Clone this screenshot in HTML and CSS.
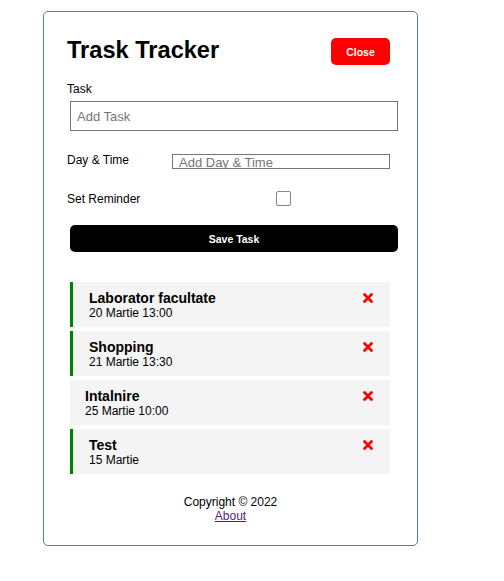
FILE: index.html
```html
<!DOCTYPE html>
<html lang="ro">
<head>
<meta charset="utf-8">
<title>Trask Tracker</title>
<link rel="stylesheet" href="styles.css">
</head>
<body>
<div class="container">
  <header class="header">
    <h1 class="title">Trask Tracker</h1>
    <button class="btn btn-close" type="button">Close</button>
  </header>

  <form class="add-form">
    <div class="field-task">
      <label class="label">Task</label>
      <input class="input-task" type="text" placeholder="Add Task">
    </div>
    <div class="field-row field-day">
      <label class="label">Day &amp; Time</label>
      <input class="input-day" type="text" placeholder="Add Day &amp; Time">
    </div>
    <div class="field-row field-reminder">
      <label class="label label-reminder">Set Reminder</label>
      <input class="checkbox" type="checkbox">
    </div>
    <button class="btn btn-save" type="button">Save Task</button>
  </form>

  <div class="tasks">
    <div class="task reminder">
      <div class="task-text">
        <h3 class="task-title">Laborator facultate</h3>
        <p class="task-day">20 Martie 13:00</p>
      </div>
      <svg class="task-del" viewBox="0 80 352 352" width="10" height="10"><path fill="#ff0000" d="M242.72 256l100.07-100.07c12.28-12.28 12.28-32.19 0-44.48l-22.24-22.24c-12.28-12.28-32.19-12.28-44.48 0L176 189.28 75.93 89.21c-12.28-12.28-32.19-12.28-44.48 0L9.21 111.45c-12.28 12.28-12.28 32.19 0 44.48L109.28 256 9.21 356.07c-12.28 12.28-12.28 32.19 0 44.48l22.24 22.24c12.28 12.28 32.2 12.28 44.48 0L176 322.72l100.07 100.07c12.28 12.28 32.2 12.28 44.48 0l22.24-22.24c12.28-12.28 12.28-32.19 0-44.48L242.72 256z"/></svg>
    </div>
    <div class="task reminder">
      <div class="task-text">
        <h3 class="task-title">Shopping</h3>
        <p class="task-day">21 Martie 13:30</p>
      </div>
      <svg class="task-del" viewBox="0 80 352 352" width="10" height="10"><path fill="#ff0000" d="M242.72 256l100.07-100.07c12.28-12.28 12.28-32.19 0-44.48l-22.24-22.24c-12.28-12.28-32.19-12.28-44.48 0L176 189.28 75.93 89.21c-12.28-12.28-32.19-12.28-44.48 0L9.21 111.45c-12.28 12.28-12.28 32.19 0 44.48L109.28 256 9.21 356.07c-12.28 12.28-12.28 32.19 0 44.48l22.24 22.24c12.28 12.28 32.2 12.28 44.48 0L176 322.72l100.07 100.07c12.28 12.28 32.2 12.28 44.48 0l22.24-22.24c12.28-12.28 12.28-32.19 0-44.48L242.72 256z"/></svg>
    </div>
    <div class="task">
      <div class="task-text">
        <h3 class="task-title">Intalnire</h3>
        <p class="task-day">25 Martie 10:00</p>
      </div>
      <svg class="task-del" viewBox="0 80 352 352" width="10" height="10"><path fill="#ff0000" d="M242.72 256l100.07-100.07c12.28-12.28 12.28-32.19 0-44.48l-22.24-22.24c-12.28-12.28-32.19-12.28-44.48 0L176 189.28 75.93 89.21c-12.28-12.28-32.19-12.28-44.48 0L9.21 111.45c-12.28 12.28-12.28 32.19 0 44.48L109.28 256 9.21 356.07c-12.28 12.28-12.28 32.19 0 44.48l22.24 22.24c12.28 12.28 32.2 12.28 44.48 0L176 322.72l100.07 100.07c12.28 12.28 32.2 12.28 44.48 0l22.24-22.24c12.28-12.28 12.28-32.19 0-44.48L242.72 256z"/></svg>
    </div>
    <div class="task reminder">
      <div class="task-text">
        <h3 class="task-title">Test</h3>
        <p class="task-day">15 Martie</p>
      </div>
      <svg class="task-del" viewBox="0 80 352 352" width="10" height="10"><path fill="#ff0000" d="M242.72 256l100.07-100.07c12.28-12.28 12.28-32.19 0-44.48l-22.24-22.24c-12.28-12.28-32.19-12.28-44.48 0L176 189.28 75.93 89.21c-12.28-12.28-32.19-12.28-44.48 0L9.21 111.45c-12.28 12.28-12.28 32.19 0 44.48L109.28 256 9.21 356.07c-12.28 12.28-12.28 32.19 0 44.48l22.24 22.24c12.28 12.28 32.2 12.28 44.48 0L176 322.72l100.07 100.07c12.28 12.28 32.2 12.28 44.48 0l22.24-22.24c12.28-12.28 12.28-32.19 0-44.48L242.72 256z"/></svg>
    </div>
  </div>

  <footer class="footer">
    <p class="copyright">Copyright &copy; 2022</p>
    <a class="about" href="#">About</a>
  </footer>
</div>
</body>
</html>
```

FILE: styles.css
```css
* {
  box-sizing: border-box;
}

body {
  margin: 0;
  background: #ffffff;
  color: #000000;
  font-family: "Liberation Sans", Arial, sans-serif;
}

.container {
  width: 375px;
  margin: 11px 0 0 43px;
  border: 1px solid #4682b4;
  border-radius: 5px;
  padding: 26px 23px 22px 23px;
}

.header {
  display: flex;
  align-items: center;
  justify-content: space-between;
  height: 27px;
  padding-right: 4px;
}

.title {
  margin: 0 0 2px 0;
  font-size: 23.6px;
  line-height: 27px;
  font-weight: bold;
}

.btn {
  border: none;
  border-radius: 5px;
  color: #ffffff;
  font-family: "Liberation Sans", Arial, sans-serif;
  font-weight: bold;
  font-size: 10.5px;
  height: 27px;
  padding: 0;
  cursor: pointer;
}

.btn-close {
  width: 59px;
  background: #ff0000;
}

.add-form {
  margin: 0;
}

.label {
  display: block;
  font-size: 12px;
  line-height: 14px;
}

.field-task {
  margin-top: 17px;
}

.input-task {
  display: block;
  margin: 5px 0 0 3px;
  width: 328px;
  height: 30px;
  border: 1px solid #767676;
  border-radius: 0;
  padding: 0 6px;
  font-family: "Liberation Sans", Arial, sans-serif;
  font-size: 13px;
  outline: none;
}

.input-task::placeholder,
.input-day::placeholder {
  color: #757575;
}

.field-row {
  display: grid;
  grid-template-columns: 105px 218px;
  align-items: start;
  margin-top: 22px;
}

.input-day {
  margin: 1px 0 0 0;
  width: 218px;
  height: 15px;
  border: 1px solid #767676;
  border-radius: 0;
  padding: 2px 6px 0 6px;
  font-family: "Liberation Sans", Arial, sans-serif;
  font-size: 13px;
  outline: none;
}

.label-reminder {
  margin-top: 1px;
}

.checkbox {
  appearance: none;
  -webkit-appearance: none;
  margin: 0 0 0 104px;
  width: 15px;
  height: 15px;
  border: 1px solid #858585;
  border-radius: 2px;
  background: #ffffff;
}

.btn-save {
  display: block;
  margin: 19px 0 0 3px;
  width: 328px;
  background: #000000;
}

.tasks {
  margin-top: 30px;
  display: flex;
  flex-direction: column;
  gap: 4px;
}

.task {
  display: flex;
  justify-content: space-between;
  align-items: flex-start;
  margin-left: 3px;
  width: 320px;
  height: 45px;
  padding: 8px 17px 7px 15px;
  background: #f4f4f4;
}

.task.reminder {
  border-left: 3px solid #008000;
  padding-left: 16px;
}

.task-title {
  margin: 0;
  font-size: 14px;
  line-height: 16px;
  font-weight: bold;
}

.task-day {
  margin: 0;
  font-size: 12px;
  line-height: 14px;
}

.task-del {
  display: block;
  margin-top: 3px;
}

.footer {
  margin-top: 21px;
  text-align: center;
  font-size: 12px;
  line-height: 14px;
}

.copyright {
  margin: 0;
}

.about {
  color: #551a8b;
}
```
